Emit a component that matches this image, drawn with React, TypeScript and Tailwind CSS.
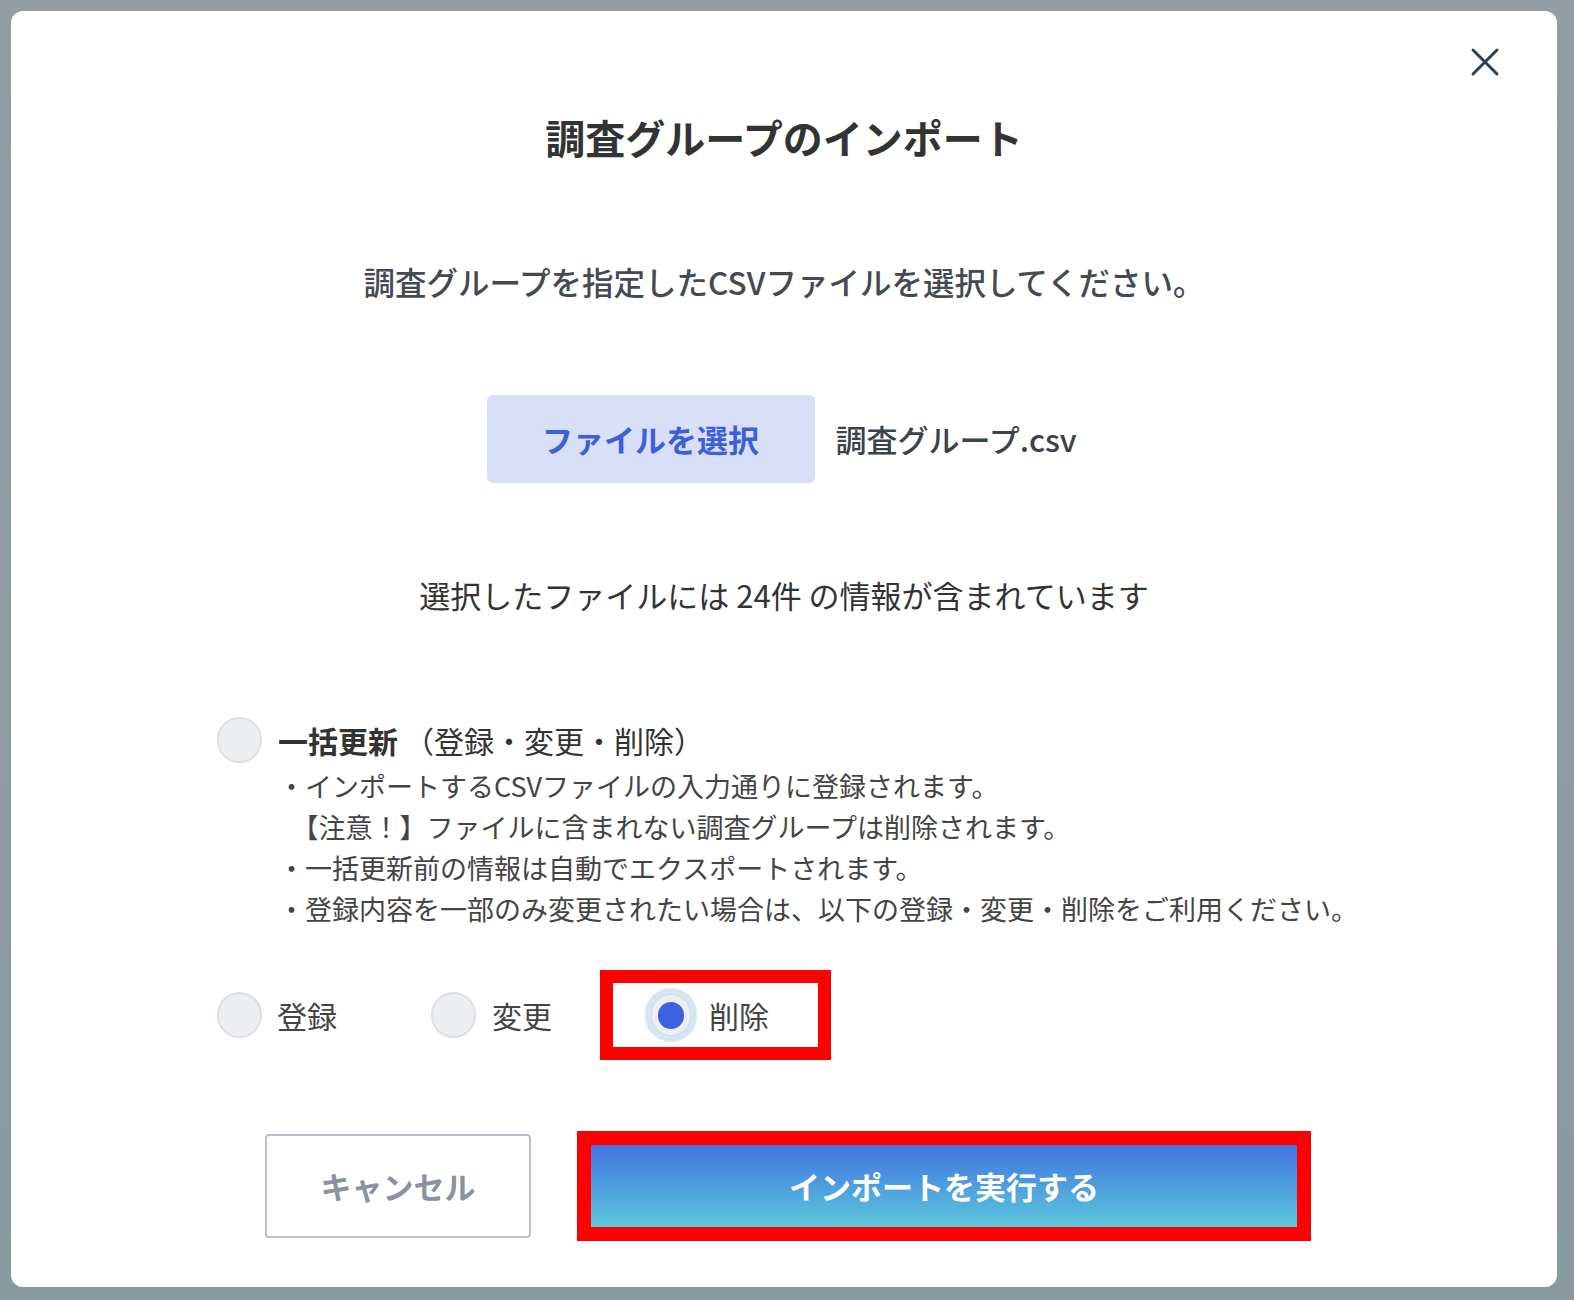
import React from "react"

const jp = { fontFamily: '"Noto Sans CJK JP", "Noto Sans", sans-serif' }

function Radio({ checked = false }: { checked?: boolean }) {
  if (checked) {
    return (
      <span className="flex items-center justify-center w-[52px] h-[54px] rounded-full bg-[#d4e6f2]">
        <span className="flex items-center justify-center w-[40px] h-[42px] rounded-full bg-[#eceef2] border border-[#d6d9df]">
          <span className="w-[26px] h-[27px] rounded-full bg-[#3d62e0]" />
        </span>
      </span>
    )
  }
  return <span className="block w-[45px] h-[46px] rounded-full bg-[#eceef1] border-2 border-[#dcdfe4]" />
}

const notes = [
  "・インポートするCSVファイルの入力通りに登録されます。",
  "　【注意！】ファイルに含まれない調査グループは削除されます。",
  "・一括更新前の情報は自動でエクスポートされます。",
  "・登録内容を一部のみ変更されたい場合は、以下の登録・変更・削除をご利用ください。",
]

export default function App() {
  return (
    <div className="w-[1574px] h-[1300px] bg-linear-to-b from-[#959ca4] to-[#879aa0] pt-[11px] pl-[11px]" style={jp}>
      <div className="relative w-[1546px] h-[1276px] bg-white rounded-[12px] flex flex-col">
        {/* close */}
        <button className="absolute right-[57px] top-[36px] w-[30px] h-[30px]">
          <svg viewBox="0 0 30 30" className="w-full h-full">
            <path d="M3 3 L27 27 M27 3 L3 27" stroke="#2b3d57" strokeWidth="3" strokeLinecap="round" />
          </svg>
        </button>

        <h1 className="mt-[98px] text-center text-[40px] leading-[56px] font-bold text-[#333]">
          調査グループのインポート
        </h1>

        <p className="mt-[94px] text-center text-[31.5px] leading-[44px] font-medium text-[#454a50]">
          調査グループを指定したCSVファイルを選択してください。
        </p>

        <div className="mt-[92px] flex items-center justify-center gap-[21px] pr-[4px]">
          <button className="w-[328px] h-[88px] rounded-[6px] bg-[#d8e0f8] text-[#3e5fd9] text-[31px] font-bold">
            ファイルを選択
          </button>
          <span className="text-[31px] font-medium text-[#3c424a] w-[242px] whitespace-nowrap">調査グループ.csv</span>
        </div>

        <p className="mt-[90px] text-center text-[31px] leading-[44px] text-[#333]">
          選択したファイルには 24件 の情報が含まれています
        </p>

        <div className="mt-[100px] pl-[206px]">
          <div className="flex items-center h-[46px] gap-[16px]">
            <Radio />
            <span className="text-[30px] text-[#333]">
              <span className="font-bold">一括更新</span>
              <span className="ml-[6px]">（登録・変更・削除）</span>
            </span>
          </div>
          <ul className="mt-[2px] pl-[61px] text-[27px] leading-[41px] text-[#444]">
            {notes.map((n, i) => (
              <li key={i} className="whitespace-pre">{n}</li>
            ))}
          </ul>

          <div className="mt-[41px] flex items-center h-[90px]">
            <div className="flex items-center gap-[15px]">
              <Radio />
              <span className="text-[30px] text-[#444]">登録</span>
            </div>
            <div className="ml-[94px] flex items-center gap-[16px]">
              <Radio />
              <span className="text-[30px] text-[#444]">変更</span>
            </div>
            <div className="ml-[48px] w-[231px] h-[90px] border-[13px] border-[#ff0000] flex items-center pl-[32px] gap-[12px]">
              <Radio checked />
              <span className="text-[30px] text-[#444]">削除</span>
            </div>
          </div>
        </div>

        <div className="mt-[71px] pl-[254px] flex items-center">
          <button className="w-[266px] h-[104px] rounded-[4px] border-2 border-[#b9c0ca] bg-white text-[31px] font-bold text-[#8a929d]">
            キャンセル
          </button>
          <div className="ml-[46px] w-[734px] h-[110px] border-[14px] border-[#ff0000]">
            <button className="w-full h-full bg-linear-to-b from-[#4473e0] to-[#5dc6db] text-white text-[31px] font-bold">
              インポートを実行する
            </button>
          </div>
        </div>
      </div>
    </div>
  )
}
